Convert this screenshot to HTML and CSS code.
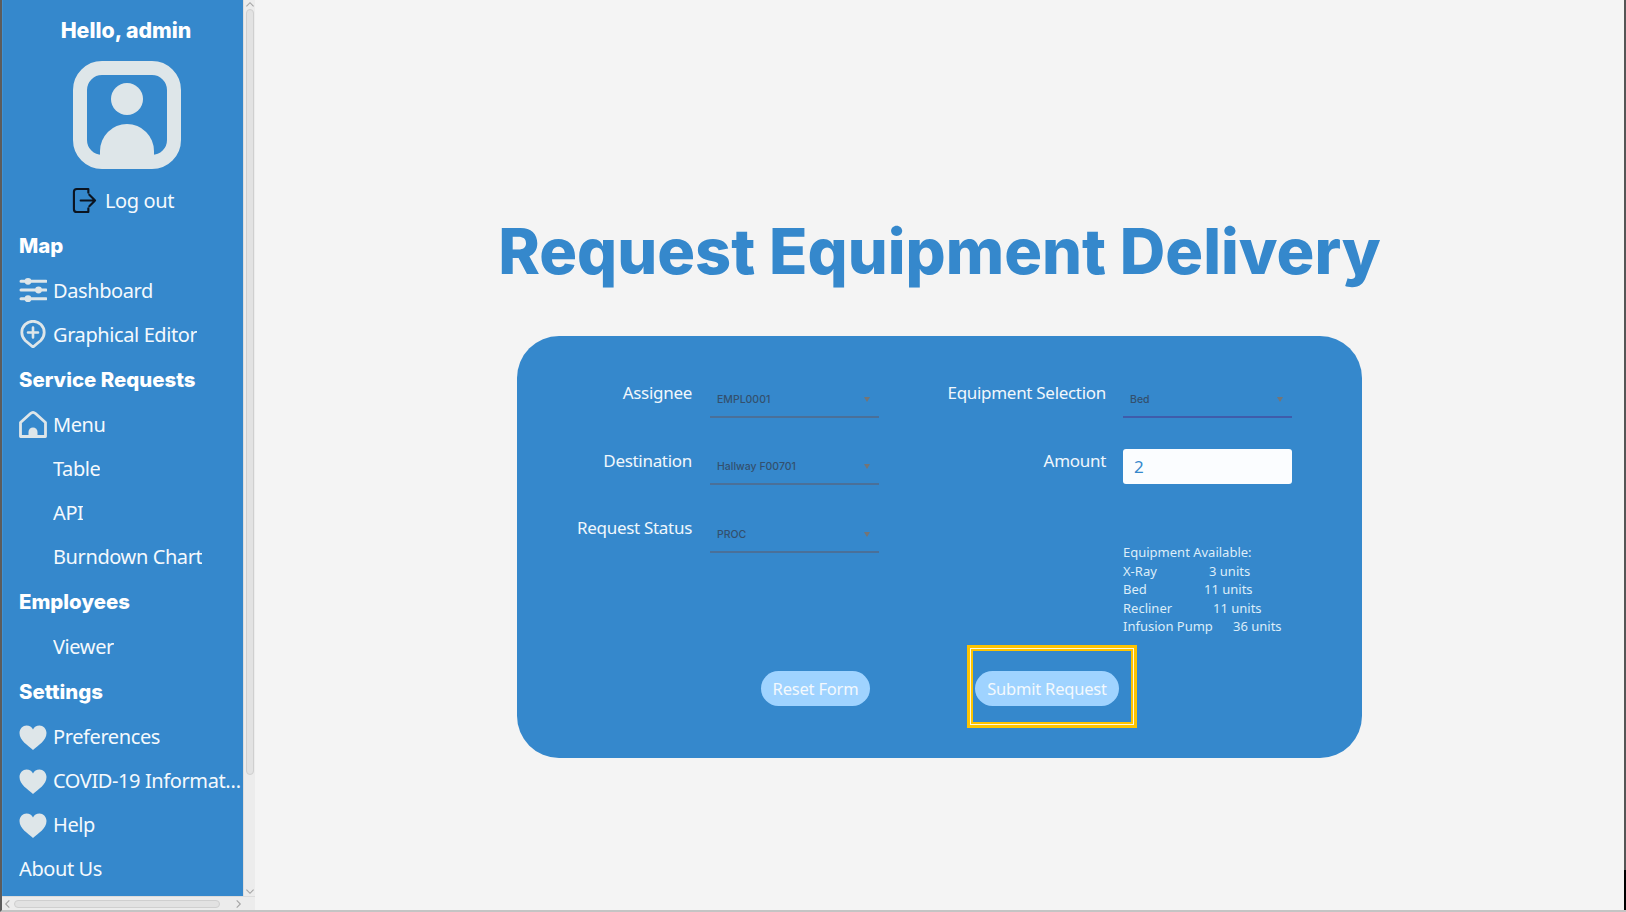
FILE: index.html
```html
<!DOCTYPE html>
<html>
<head>
  <meta charset="utf-8">
  <title>Request Equipment Delivery</title>
  <link rel="stylesheet" href="styles.css">
</head>
<body>
  <div id="app">
    <div id="side-frame">
      <div id="side-top">
        <nav id="sidebar">
          <div class="hello">Hello, admin</div>
          <div class="avatar-wrap">
            <svg class="avatar" viewBox="0 0 108 108">
              <rect x="7" y="7" width="94" height="94" rx="22" fill="none" stroke="#dee6e9" stroke-width="14"/>
              <circle cx="54" cy="38" r="16" fill="#dee6e9"/>
              <path d="M27 96V90A27 27 0 0 1 81 90V96Z" fill="#dee6e9"/>
            </svg>
          </div>
          <div class="logout">
            <svg class="logout-icon" viewBox="0 0 26 28">
              <path d="M17 2H5Q2 2 2 5V23Q2 26 5 26H17M17 26V22M17 2V6" fill="none" stroke="#0b1420" stroke-width="2.2" stroke-linecap="round"/>
              <path d="M9 14H24M18 8L24 14L18 20" fill="none" stroke="#0b1420" stroke-width="2.2" stroke-linecap="round" stroke-linejoin="round"/>
            </svg>
            <span>Log out</span>
          </div>

          <div class="group">Map</div>
          <div class="item">
            <svg class="icon" viewBox="0 0 28 28">
              <path d="M2 5.3H27M2 14H27M2 22.7H27" stroke="#dee6e9" stroke-width="3" stroke-linecap="round"/>
              <circle cx="9" cy="5.3" r="3.4" fill="#dee6e9"/>
              <circle cx="19.5" cy="14" r="3.4" fill="#dee6e9"/>
              <circle cx="9" cy="22.7" r="3.4" fill="#dee6e9"/>
            </svg>
            <span class="label">Dashboard</span>
          </div>
          <div class="item">
            <svg class="icon" viewBox="0 0 28 28">
              <path d="M14 27L6.2 20.5A11.2 11.2 0 1 1 21.8 20.5Z" fill="none" stroke="#dee6e9" stroke-width="2.8" stroke-linejoin="round"/>
              <path d="M14 7.5V17.5M9 12.5H19" stroke="#dee6e9" stroke-width="2.6" stroke-linecap="round"/>
            </svg>
            <span class="label">Graphical Editor</span>
          </div>

          <div class="group">Service Requests</div>
          <div class="item">
            <svg class="icon" viewBox="0 0 28 28">
              <path d="M11.5 3.5Q14 1.2 16.5 3.5L26.5 12.5V26.5H1.5V12.5Z" fill="none" stroke="#dee6e9" stroke-width="2.8" stroke-linejoin="round"/>
              <path d="M9.5 26V22A4.5 4.5 0 0 1 18.5 22V26Z" fill="#dee6e9"/>
            </svg>
            <span class="label">Menu</span>
          </div>
          <div class="item"><span class="spacer"></span><span class="label">Table</span></div>
          <div class="item"><span class="spacer"></span><span class="label">API</span></div>
          <div class="item"><span class="spacer"></span><span class="label">Burndown Chart</span></div>

          <div class="group">Employees</div>
          <div class="item"><span class="spacer"></span><span class="label">Viewer</span></div>

          <div class="group">Settings</div>
          <div class="item">
            <svg class="icon" viewBox="0 0 28 28"><path class="heart" d="M14 27C9 22.5 0.5 17.5 0.5 10C0.5 5.5 4 2.5 7.5 2.5C10.5 2.5 12.8 4.1 14 6.5C15.2 4.1 17.5 2.5 20.5 2.5C24 2.5 27.5 5.5 27.5 10C27.5 17.5 19 22.5 14 27Z"/></svg>
            <span class="label">Preferences</span>
          </div>
          <div class="item">
            <svg class="icon" viewBox="0 0 28 28"><path class="heart" d="M14 27C9 22.5 0.5 17.5 0.5 10C0.5 5.5 4 2.5 7.5 2.5C10.5 2.5 12.8 4.1 14 6.5C15.2 4.1 17.5 2.5 20.5 2.5C24 2.5 27.5 5.5 27.5 10C27.5 17.5 19 22.5 14 27Z"/></svg>
            <span class="label">COVID-19 Information</span>
          </div>
          <div class="item">
            <svg class="icon" viewBox="0 0 28 28"><path class="heart" d="M14 27C9 22.5 0.5 17.5 0.5 10C0.5 5.5 4 2.5 7.5 2.5C10.5 2.5 12.8 4.1 14 6.5C15.2 4.1 17.5 2.5 20.5 2.5C24 2.5 27.5 5.5 27.5 10C27.5 17.5 19 22.5 14 27Z"/></svg>
            <span class="label">Help</span>
          </div>
          <div class="item"><span class="label">About Us</span></div>
        </nav>

        <div id="vbar">
          <svg class="arrow" viewBox="0 0 12 10"><path d="M2 7L6 3L10 7" fill="none" stroke="#a4a4a4" stroke-width="1.2"/></svg>
          <div class="vthumb"></div>
          <svg class="arrow" viewBox="0 0 12 10"><path d="M2 3L6 7L10 3" fill="none" stroke="#a4a4a4" stroke-width="1.2"/></svg>
        </div>
      </div>
      <div id="hbar">
        <svg class="arrow-h" viewBox="0 0 10 12"><path d="M7 2L3 6L7 10" fill="none" stroke="#a4a4a4" stroke-width="1.2"/></svg>
        <div class="hthumb"></div>
        <svg class="arrow-h" viewBox="0 0 10 12"><path d="M3 2L7 6L3 10" fill="none" stroke="#a4a4a4" stroke-width="1.2"/></svg>
      </div>
    </div>

    <main id="content">
      <h1 class="title">Request Equipment Delivery</h1>
      <div class="card">
        <div class="form-grid">
          <div class="form-col form-left">
            <div class="field">
              <div class="field-label">Assignee</div>
              <div class="pick"><span>EMPL0001</span><i class="caret"></i></div>
            </div>
            <div class="field">
              <div class="field-label">Destination</div>
              <div class="pick"><span>Hallway F00701</span><i class="caret"></i></div>
            </div>
            <div class="field">
              <div class="field-label">Request Status</div>
              <div class="pick"><span>PROC</span><i class="caret"></i></div>
            </div>
          </div>
          <div class="form-col form-right">
            <div class="field">
              <div class="field-label">Equipment Selection</div>
              <div class="pick pick-active"><span>Bed</span><i class="caret"></i></div>
            </div>
            <div class="field">
              <div class="field-label">Amount</div>
              <div class="amount">2</div>
            </div>
            <div class="stock">
              <div>Equipment Available:</div>
              <div class="stock-row"><span class="w-xray">X-Ray</span>3 units</div>
              <div class="stock-row"><span class="w-bed">Bed</span>11 units</div>
              <div class="stock-row"><span class="w-recliner">Recliner</span>11 units</div>
              <div class="stock-row"><span class="w-pump">Infusion Pump</span>36 units</div>
            </div>
          </div>
        </div>
        <div class="form-actions">
          <div class="btn btn-reset">Reset Form</div>
          <div class="highlight">
            <div class="btn btn-submit">Submit Request</div>
          </div>
        </div>
      </div>
    </main>
    <div id="edge"></div>
  </div>
</body>
</html>
```

FILE: styles.css
```css
*, *:before, *:after { box-sizing: border-box; }
html, body { height: 100%; }
body { margin: 0; padding: 0; font-family: "Noto Sans", sans-serif; background-color: #f4f4f4; overflow: hidden; }
#app { display: flex; flex-direction: row; height: 100%; border-left: 2px solid #5c5c5c; border-bottom: 2px solid #c4c4c4; }
#edge { width: 2px; background: linear-gradient(#555 870px, #000 870px); }

/* sidebar */
#side-frame { width: 253px; display: flex; flex-direction: column; background-color: #ececec; flex-shrink: 0; }
#side-top { flex: 1; display: flex; flex-direction: row; min-height: 0; }
#sidebar { width: 241px; background-color: #3588cc; border-left: 1px solid #3f93d6; color: #f4f9fd; overflow: hidden; }

.hello { height: 61px; padding: 15px 0 0 6px; text-align: center; font-family: Inter, sans-serif; font-weight: 800; font-size: 21.3px; line-height: 30px; color: #fff; }
.avatar-wrap { display: flex; justify-content: center; height: 117px; padding-left: 7px; }
.avatar { width: 108px; height: 108px; display: block; }
.logout { display: flex; justify-content: center; align-items: center; gap: 8px; height: 44px; font-size: 20px; letter-spacing: -0.4px; }
.logout-icon { width: 25px; height: 27px; }

.group { height: 46px; padding-left: 16px; display: flex; align-items: center; font-family: Inter, sans-serif; font-weight: 800; font-size: 20.4px; color: #fff; }
.item { height: 44.1px; padding-left: 16px; display: flex; align-items: center; gap: 6px; font-size: 20px; letter-spacing: -0.4px; }
.icon { width: 28px; height: 28px; flex-shrink: 0; }
.spacer { width: 28px; flex-shrink: 0; }
.label { min-width: 0; white-space: nowrap; overflow: hidden; text-overflow: ellipsis; }
.heart { fill: #dee6e9; }

/* fake scrollbars */
#vbar { width: 12px; display: flex; flex-direction: column; align-items: center; background-color: #ececec; border-left: 1px solid #dcdcdc; }
.arrow { width: 12px; height: 9px; flex-shrink: 0; }
.vthumb { width: 8px; height: 766px; margin-bottom: auto; background-color: #e2e2e2; border: 1px solid #cfcfcf; border-radius: 4px; }
#hbar { height: 14px; display: flex; align-items: center; padding: 0 12px 0 1px; gap: 2px; background-color: #ececec; border-top: 1px solid #dcdcdc; }
.arrow-h { width: 9px; height: 12px; flex-shrink: 0; }
.hthumb { width: 206px; height: 8px; margin-right: auto; background-color: #e2e2e2; border: 1px solid #cfcfcf; border-radius: 4px; }

/* main */
#content { flex: 1; display: flex; flex-direction: column; align-items: center; padding-top: 209px; }
.title { margin: 0 0 43px; height: 84px; font-family: Inter, sans-serif; font-weight: 800; font-size: 63px; line-height: 84px; color: #3588cc; white-space: nowrap; }

.card { width: 845px; height: 422px; padding-top: 46px; background-color: #3588cc; border-radius: 42px; color: #f0f7fc; }
.form-grid { display: flex; flex-direction: row; }
.form-col { display: flex; flex-direction: column; }

.field { display: flex; flex-direction: row; height: 67.5px; gap: 17px; }
.field-label { text-align: right; font-size: 17px; letter-spacing: -0.3px; line-height: 22px; white-space: nowrap; }
.form-left .field-label { width: 175px; }
.form-left .field { gap: 18px; }
.form-right .field-label { width: 227px; }
.pick { width: 169px; height: 35.5px; padding: 1px 9px 0 7px; display: flex; align-items: center; justify-content: space-between; border-bottom: 2px solid #4a7099; font-family: Inter, sans-serif; font-weight: 500; font-size: 10.5px; color: #33506e; }
.pick-active { border-bottom-color: #3f5cab; }
.caret { width: 0; height: 0; border-left: 3.5px solid transparent; border-right: 3.5px solid transparent; border-top: 5px solid #757575; }
.amount { width: 169px; height: 35px; margin-top: -1px; padding: 0 11px; background-color: #fbfdff; border-radius: 3px; font-size: 17px; line-height: 35px; color: #3588cc; }

.stock { margin: 26px 0 0 244px; font-size: 13px; line-height: 18.6px; color: #dcedf9; white-space: nowrap; }
.stock-row span { display: inline-block; }
.w-xray { width: 86px; }
.w-bed { width: 81px; }
.w-recliner { width: 90px; }
.w-pump { width: 110px; }

.form-actions { display: flex; flex-direction: row; align-items: flex-start; padding-left: 244px; margin-top: 9px; }
.btn { height: 35px; border-radius: 18px; background-color: #9fd3ff; color: #f4f9fd; font-size: 16.5px; letter-spacing: -0.2px; line-height: 35px; text-align: center; white-space: nowrap; }
.btn-reset { width: 109px; margin-top: 26px; margin-right: 97px; }
.btn-submit { width: 144px; }
.highlight { width: 170px; height: 83px; padding: 23px 0 0 5px; border: 3px solid #fdc300; box-shadow: inset 0 0 0 1px #fff8dc, inset 0 0 0 3px #fdc300; }
```
